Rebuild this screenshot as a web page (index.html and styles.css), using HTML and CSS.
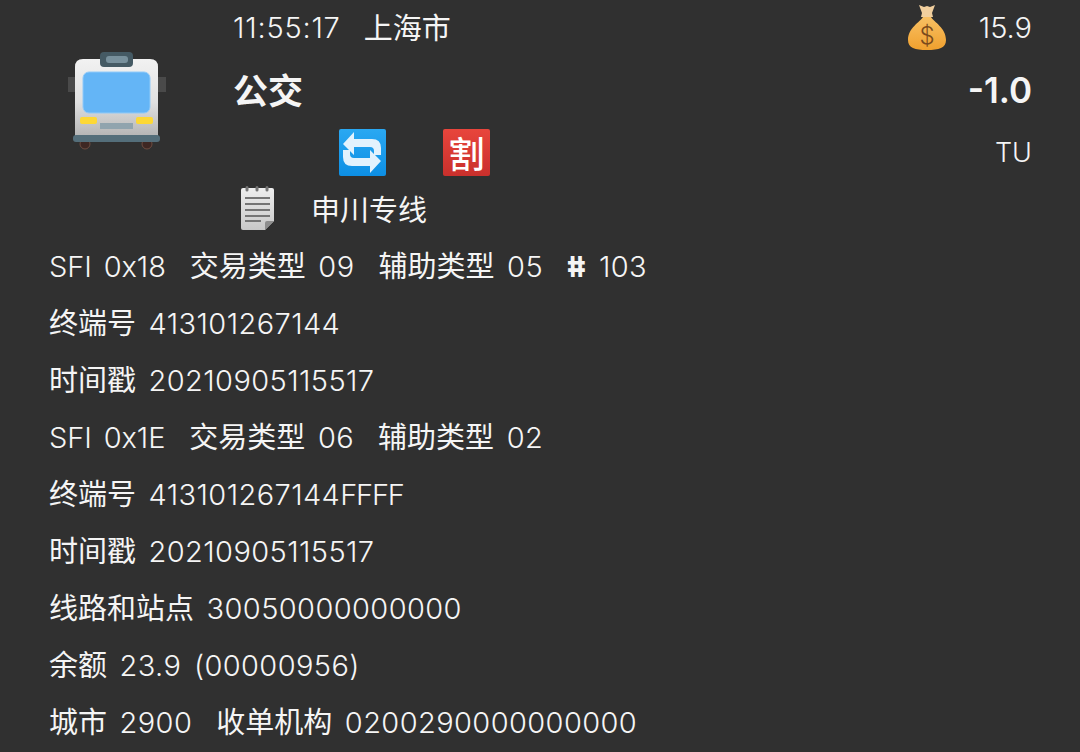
FILE: index.html
```html
<!DOCTYPE html>
<html>
<head>
    <meta charset="utf-8">
    <title>交易记录</title>
    <link rel="stylesheet" href="styles.css">
</head>
<body>
    <div class="record">
        <div class="head">
            <div class="head-icon">
                <svg class="bus" width="100" height="100" viewBox="0 0 100 100">
                    <defs>
                        <linearGradient id="busBody" x1="0" y1="0" x2="0" y2="1">
                            <stop offset="0" stop-color="#f2f2f2"/>
                            <stop offset="0.55" stop-color="#e0e0e0"/>
                            <stop offset="1" stop-color="#b4b4b4"/>
                        </linearGradient>
                    </defs>
                    <rect x="1" y="27" width="7" height="15" fill="#4a4a4a"/>
                    <rect x="91" y="27" width="8" height="15" fill="#4a4a4a"/>
                    <circle cx="18" cy="94" r="5" fill="#3e2723" stroke="#6d4c41"/>
                    <circle cx="80" cy="94" r="5" fill="#3e2723" stroke="#6d4c41"/>
                    <path d="M8 17q0-8 8-8h67q8 0 8 8v70H8z" fill="url(#busBody)"/>
                    <rect x="33" y="2" width="33" height="15" rx="4" fill="#455a64"/>
                    <rect x="39" y="6" width="22" height="7" rx="3" fill="#78909c"/>
                    <rect x="16" y="22" width="67" height="41" rx="6" fill="#64b5f6" stroke="#90caf9"/>
                    <rect x="13" y="67" width="17" height="7" rx="2" fill="#fdd835"/>
                    <rect x="69" y="67" width="17" height="7" rx="2" fill="#fdd835"/>
                    <rect x="33" y="73" width="33" height="6" fill="#90a4ae"/>
                    <rect x="6" y="85" width="87" height="7" rx="3" fill="#546e7a"/>
                </svg>
            </div>
            <div class="head-main">
                <div class="head-line top"><span class="time">11:55:17</span><span class="city zh">上海市</span></div>
                <div class="head-line title">公交</div>
                <div class="head-line badges">
                    <svg class="badge" width="47" height="47" viewBox="0 0 47 47">
                        <defs>
                            <linearGradient id="badgeBlue" x1="0" y1="0" x2="0" y2="1">
                                <stop offset="0" stop-color="#2aa8f2"/>
                                <stop offset="1" stop-color="#0d8fe4"/>
                            </linearGradient>
                        </defs>
                        <rect width="47" height="47" rx="2" fill="url(#badgeBlue)"/>
                        <path d="M15 3v7h18q9 0 9 9v7h-7v-4q0-4-4-4H15v8L4 15z" fill="#e3f2fd"/>
                        <path d="M31 44v-7H13q-9 0-9-9v-7h7v4q0 4 4 4h16v-8l11 11z" fill="#e3f2fd"/>
                    </svg>
                    <span class="discount">割</span>
                </div>
                <div class="head-line note">
                    <svg class="note-icon" width="36" height="46" viewBox="0 0 36 46">
                        <defs>
                            <linearGradient id="notePage" x1="0" y1="0" x2="0" y2="1">
                                <stop offset="0" stop-color="#eeeeee"/>
                                <stop offset="1" stop-color="#c8c8c8"/>
                            </linearGradient>
                        </defs>
                        <path d="M3 3h29q2 0 2 2v31l-9 9H3q-2 0-2-2V5q0-2 2-2z" fill="url(#notePage)"/>
                        <path d="M25 45v-7q0-2 2-2h7z" fill="#8e8e8e"/>
                        <path d="M7 5V2.500M17 5V2.500M27 5V2.500" stroke="#757575" stroke-width="3" stroke-linecap="round"/>
                        <path d="M5 13h25M5 19h25M5 25h25M5 31h25M5 36h16" stroke="#757575" stroke-width="2.200"/>
                    </svg>
                    <span class="zh">申川专线</span>
                </div>
            </div>
            <div class="head-side">
                <div class="head-line top balance">
                    <svg class="bag" width="38" height="46" viewBox="0 0 38 46">
                        <defs>
                            <linearGradient id="bagFill" x1="0" y1="0" x2="0" y2="1">
                                <stop offset="0" stop-color="#f8c063"/>
                                <stop offset="1" stop-color="#f0a02e"/>
                            </linearGradient>
                        </defs>
                        <path d="M15 12h8c3 5 15 11 15 23 0 8-7 10-19 10S0 43 0 35c0-12 12-18 15-23z" fill="url(#bagFill)"/>
                        <path d="M11 0l5 2 3-1 3 1 5-2-3 8 1 4H13l1-4z" fill="#f1cf9e"/>
                        <text class="bag-sign" x="19" y="39" text-anchor="middle">$</text>
                    </svg>
                    <span class="balance-num">15.9</span>
                </div>
                <div class="head-line amount">-1.0</div>
                <div class="head-line badges unit">TU</div>
            </div>
        </div>
        <div class="rows">
            <div class="row"><span class="sfi">SFI 0x18</span><span><span class="zh">交易类型</span> 09</span><span><span class="zh">辅助类型</span> 05</span><span><b class="hash">#</b> 103</span></div>
            <div class="row"><span><span class="zh">终端号</span> 413101267144</span></div>
            <div class="row"><span><span class="zh">时间戳</span> 20210905115517</span></div>
            <div class="row"><span class="sfi">SFI 0x1E</span><span><span class="zh">交易类型</span> 06</span><span><span class="zh">辅助类型</span> 02</span></div>
            <div class="row"><span><span class="zh">终端号</span> 413101267144<span class="hex">FFFF</span></span></div>
            <div class="row"><span><span class="zh">时间戳</span> 20210905115517</span></div>
            <div class="row"><span><span class="zh">线路和站点</span> 30050000000000</span></div>
            <div class="row"><span><span class="zh">余额</span> 23.9 (00000956)</span></div>
            <div class="row"><span><span class="zh">城市</span> 2900</span><span><span class="zh">收单机构</span> 0200290000000000</span></div>
        </div>
    </div>
</body>
</html>
```

FILE: styles.css
```css
html,body{margin:0;padding:0;}
body{
    width:1080px;
    height:752px;
    overflow:hidden;
    background:#303030;
    color:#f5f5f5;
    font-family:Inter,"Noto Sans CJK SC",sans-serif;
    font-size:29px;
    font-weight:300;
}
.zh{font-size:29px;font-family:"Noto Sans CJK SC",sans-serif;font-weight:400;letter-spacing:0;}
.record{padding:0 48px 0 49px;}
.head{display:flex;height:236px;}
.head-icon{width:184px;padding-top:50px;box-sizing:border-box;}
.bus{display:block;margin-left:18px;}
.head-main{flex:1;}
.head-side{width:200px;}
.head-line{height:57px;display:flex;align-items:center;}
.head-line.top{height:51px;}
.time{letter-spacing:0.8px;margin-top:4px;}
.city{margin-left:23px;}
.title{height:74px;font-size:35px;font-weight:700;}
.head-line.badges{height:54px;}
.badges{padding-left:106px;gap:57px;}
.badge{display:block;}
.discount{
    width:47px;
    height:47px;
    background:linear-gradient(#e8453c,#c9302c);
    border-radius:2px;
    color:#fff;
    font-family:"Noto Sans CJK SC",sans-serif;
    font-size:36px;
    font-weight:500;
    line-height:47px;
    text-align:center;
}
.note{padding-left:7px;gap:35px;}
.note-icon{display:block;}
.head-side .head-line{justify-content:flex-end;}
.balance{gap:33px;}
.balance-num{margin-top:4px;}
.bag{display:block;margin-top:4px;}
.bag-sign{font-size:24px;fill:#7a4a1c;}
.amount{height:74px;padding-top:4px;box-sizing:border-box;font-size:35px;font-weight:600;}
.head-side .unit{padding-left:0;font-size:27px;}
.rows{display:flex;flex-direction:column;}
.row{
    height:57px;
    line-height:57px;
    display:flex;
    align-items:baseline;
    gap:24px;
    white-space:nowrap;
    word-spacing:4px;
    letter-spacing:0.4px;
}
.sfi{letter-spacing:-0.1px;}
.hex{letter-spacing:-1.2px;}
.hash{display:inline-block;font-weight:800;transform:skewX(10deg);}
```
